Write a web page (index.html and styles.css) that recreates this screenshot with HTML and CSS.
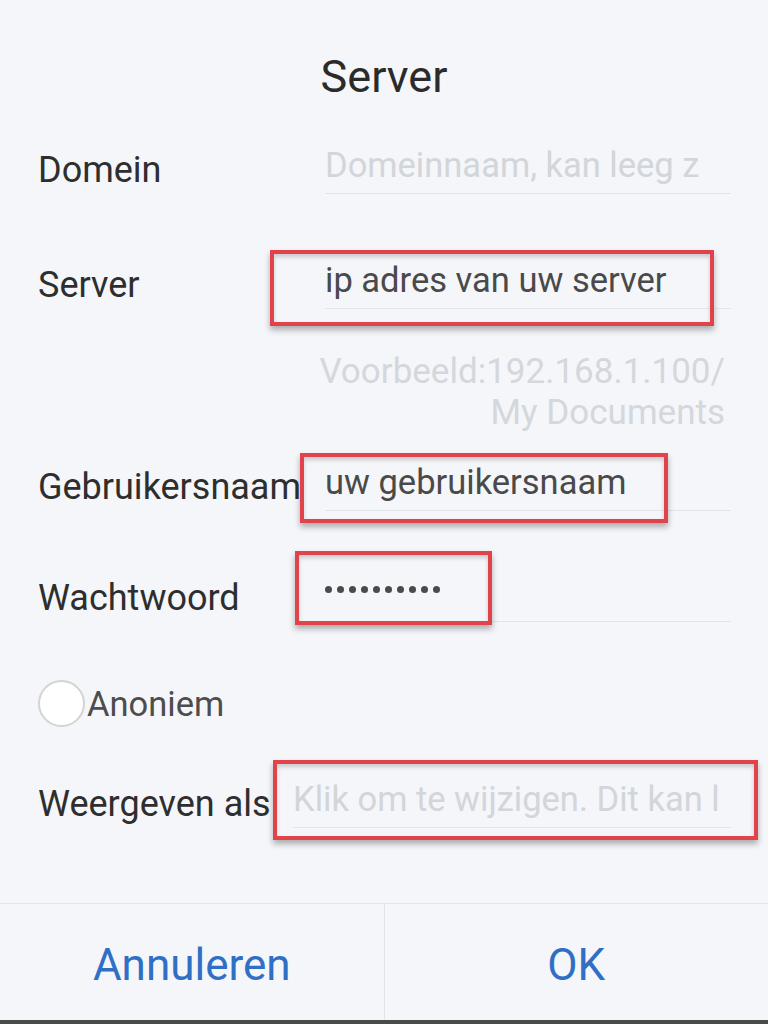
FILE: index.html
```html
<!DOCTYPE html>
<html lang="nl">
<head>
    <meta charset="UTF-8">
    <meta name="viewport" content="width=device-width, initial-scale=1.0">
    <title>Server</title>
    <link rel="stylesheet" href="styles.css">
</head>
<body>
    <div class="dialog">
        <h1 class="title">Server</h1>
        <form class="form">
            <div class="row row-domain">
                <label class="label">Domein</label>
                <div class="field placeholder">Domeinnaam, kan leeg z</div>
            </div>
            <div class="row row-server">
                <label class="label">Server</label>
                <div class="field">ip adres van uw server</div>
                <span class="mark mark-server"></span>
            </div>
            <div class="hint">Voorbeeld:192.168.1.100/<br>My Documents</div>
            <div class="row row-user">
                <label class="label">Gebruikersnaam</label>
                <div class="field">uw gebruikersnaam</div>
                <span class="mark mark-user"></span>
            </div>
            <div class="row row-pass">
                <label class="label">Wachtwoord</label>
                <div class="field">
                    <span class="dots">
                        <i></i><i></i><i></i><i></i><i></i><i></i><i></i><i></i><i></i><i></i>
                    </span>
                </div>
                <span class="mark mark-pass"></span>
            </div>
            <div class="check">
                <span class="radio"></span>
                <span class="check-text">Anoniem</span>
            </div>
            <div class="row row-display">
                <label class="label">Weergeven als</label>
                <div class="field placeholder">Klik om te wijzigen. Dit kan l</div>
                <span class="mark mark-display"></span>
            </div>
        </form>
        <div class="actions">
            <button class="action" type="button">Annuleren</button>
            <button class="action" type="button">OK</button>
        </div>
    </div>
</body>
</html>
```

FILE: styles.css
```css
body {
    margin: 0;
    padding: 0;
    font-family: Roboto, "Noto Sans", Arial, sans-serif;
    background: #f4f6f9;
}

.dialog {
    width: 768px;
    height: 1024px;
    background: #f4f6f9;
    display: flex;
    flex-direction: column;
    box-sizing: border-box;
    border-bottom: 4px solid #4a4a4a;
}

.title {
    margin: 0;
    padding-top: 52px;
    font-size: 45px;
    line-height: 50px;
    font-weight: 400;
    color: #2b2b2b;
    text-align: center;
}

.form {
    padding: 0 37px 0 38px;
    flex: 1;
}

.row {
    position: relative;
    display: flex;
    align-items: flex-end;
}

.label {
    width: 287px;
    flex-shrink: 0;
    font-size: 36px;
    line-height: 48px;
    color: #2e2e2e;
    white-space: nowrap;
}

.field {
    flex: 1;
    min-width: 0;
    height: 48px;
    font-size: 34.5px;
    line-height: 48px;
    padding-bottom: 4px;
    border-bottom: 1px solid #e1e4e8;
    color: #4a4a4a;
    white-space: nowrap;
}

.placeholder {
    color: #d2d5d9;
}

.row-domain { margin-top: 39px; }
.row-server { margin-top: 62px; }
.row-user { margin-top: 25px; }
.row-pass { margin-top: 58px; }
.row-display { margin-top: 48px; }

.row-display .label {
    width: 255px;
}

.hint {
    margin-top: 42px;
    padding-right: 6px;
    text-align: right;
    font-size: 35px;
    line-height: 41px;
    color: #d4d7db;
}

.dots {
    display: flex;
    gap: 5px;
    height: 48px;
    align-items: center;
    margin-top: -4px;
}

.dots i {
    width: 7px;
    height: 7px;
    border-radius: 50%;
    background: #4a4a4a;
}

.check {
    margin-top: 58px;
    display: flex;
    align-items: center;
    height: 47px;
}

.radio {
    width: 43px;
    height: 43px;
    border: 2px solid #d3d3d3;
    border-radius: 50%;
    background: #fff;
}

.check-text {
    font-size: 34.5px;
    color: #4d4d4d;
    margin-left: 2px;
}

/* red annotation boxes */
.mark {
    position: absolute;
    box-sizing: border-box;
    border: 4px solid #e0434a;
    box-shadow: 0 4px 6px rgba(0, 0, 0, 0.3), inset 0 3px 4px rgba(0, 0, 0, 0.18);
}

.mark-server { left: 232px; top: -6px; width: 444px; height: 76px; }
.mark-user { left: 262px; top: -5px; width: 368px; height: 70px; }
.mark-pass { left: 257px; top: -18px; width: 197px; height: 74px; }
.mark-display { left: 235px; top: -15px; width: 485px; height: 80px; }

.actions {
    display: flex;
    height: 116px;
    border-top: 1px solid #e1e4e8;
}

.action {
    flex: 1;
    border: none;
    background: transparent;
    font-family: inherit;
    font-size: 44px;
    color: #2f6fc5;
    padding: 6px 0 0 0;
}

.action + .action {
    border-left: 1px solid #e1e4e8;
}
```
